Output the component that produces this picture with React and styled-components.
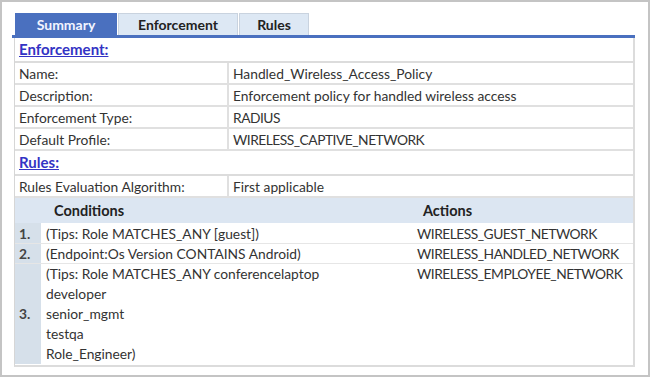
import React from "react";
import styled, { createGlobalStyle } from "styled-components";

const Global = createGlobalStyle`
  html, body { margin: 0; padding: 0; background: #fff; }
  body { font-family: Lato, "Open Sans", sans-serif; color: #333; }
`;

const Frame = styled.div`
  width: 650px;
  height: 377px;
  box-sizing: border-box;
  border: 2px solid #c4c4c4;
  padding: 11px 13px 0 10px;
  overflow: hidden;
`;

const TabBar = styled.div`
  display: flex;
  padding-left: 3px;
  border-bottom: 3px solid #4a70bf;
`;

const Tab = styled.div`
  height: 22px;
  box-sizing: border-box;
  width: ${(p) => p.$w}px;
  display: flex;
  align-items: center;
  justify-content: center;
  font-weight: bold;
  font-size: 14px;
  color: ${(p) => (p.$active ? "#f2f5ff" : "#222")};
  background: ${(p) => (p.$active ? "#4a70bf" : "#dde8f4")};
  border: 1px solid ${(p) => (p.$active ? "#4a70bf" : "#c9d3df")};
  border-bottom: none;
  margin-right: 1px;
`;

const Panel = styled.div`
  margin-left: 2px;
  border-left: 1px solid #d6d6d6;
  border-right: 2px solid #dcdcdc;
  border-bottom: 2px solid #dcdcdc;
`;

const Heading = styled.div`
  height: 25px;
  box-sizing: border-box;
  display: flex;
  align-items: flex-end;
  padding: 0 0 3px 4px;
  border-bottom: 2px solid #dcdcdc;
  font-size: 15px;
  font-weight: bold;
  color: #3333c4;
  text-decoration: underline;
`;

const Row = styled.div`
  display: grid;
  grid-template-columns: 212px 1fr;
  height: 22px;
  box-sizing: border-box;
  border-bottom: 2px solid #e0e0e0;
  font-size: 13.8px;
`;

const Cell = styled.div`
  display: flex;
  align-items: center;
  padding-left: 4px;
  letter-spacing: ${(p) => (p.$caps ? "-0.5px" : "normal")};
  & + & {
    border-left: 2px solid #e0e0e0;
  }
`;

const RuleHead = styled.div`
  display: grid;
  grid-template-columns: 402px 1fr;
  height: 25px;
  align-items: center;
  background: #dce6f2;
  font-weight: bold;
  font-size: 14.5px;
  color: #222;
  & > span:first-child { padding-left: 39px; }
  & > span:last-child { padding-left: 6px; }
`;

const RuleRow = styled.div`
  display: grid;
  grid-template-columns: 26px 376px 1fr;
  font-size: 13.8px;
  line-height: ${(p) => (p.$multi ? 20 : 19)}px;
  border-bottom: 1px solid ${(p) => (p.$last ? "transparent" : "#e6e6e6")};
`;

const Num = styled.div`
  background: #d6e0ea;
  display: flex;
  align-items: center;
  padding-left: 4px;
  font-weight: bold;
  color: #444;
`;

const Lines = styled.div`
  padding-left: 5px;
  padding-top: ${(p) => (p.$top ? 1 : 0)}px;
`;

const Action = styled.div`
  padding-top: ${(p) => (p.$top ? 1 : 0)}px;
  letter-spacing: -0.5px;
`;

const rules = [
  { cond: ["(Tips: Role MATCHES_ANY [guest])"], act: "WIRELESS_GUEST_NETWORK" },
  { cond: ["(Endpoint:Os Version CONTAINS Android)"], act: "WIRELESS_HANDLED_NETWORK" },
  {
    cond: [
      "(Tips: Role MATCHES_ANY conferencelaptop",
      "developer",
      "senior_mgmt",
      "testqa",
      "Role_Engineer)",
    ],
    act: "WIRELESS_EMPLOYEE_NETWORK",
  },
];

const info = [
  ["Name:", "Handled_Wireless_Access_Policy"],
  ["Description:", "Enforcement policy for handled wireless access"],
  ["Enforcement Type:", "RADIUS", true],
  ["Default Profile:", "WIRELESS_CAPTIVE_NETWORK", true],
];

export default function App() {
  return (
    <>
      <Global />
      <Frame>
        <TabBar>
          <Tab $active $w={102}>Summary</Tab>
          <Tab $w={120}>Enforcement</Tab>
          <Tab $w={70}>Rules</Tab>
        </TabBar>
        <Panel>
          <Heading>Enforcement:</Heading>
          {info.map(([k, v, caps]) => (
            <Row key={k}>
              <Cell>{k}</Cell>
              <Cell $caps={caps}>{v}</Cell>
            </Row>
          ))}
          <Heading>Rules:</Heading>
          <Row>
            <Cell>Rules Evaluation Algorithm:</Cell>
            <Cell>First applicable</Cell>
          </Row>
          <RuleHead>
            <span>Conditions</span>
            <span>Actions</span>
          </RuleHead>
          {rules.map((r, i) => (
            <RuleRow
              key={i}
              $multi={r.cond.length > 1}
              $last={i === rules.length - 1}
            >
              <Num>{i + 1}.</Num>
              <Lines $top={i === 0}>
                {r.cond.map((c) => (
                  <div key={c}>{c}</div>
                ))}
              </Lines>
              <Action $top={i === 0}>{r.act}</Action>
            </RuleRow>
          ))}
        </Panel>
      </Frame>
    </>
  );
}
